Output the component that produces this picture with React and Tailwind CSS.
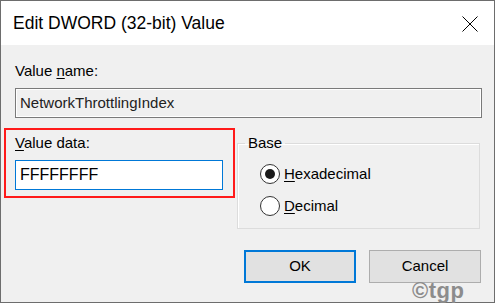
import React from "react";

const font = { fontFamily: "'Liberation Sans', Arial, sans-serif" };

function Radio({ checked, accessKey, rest }) {
  return (
    <div className="flex items-center h-[32px]">
      <span className="w-[20px] h-[20px] rounded-full border border-[#333333] bg-white flex items-center justify-center shrink-0">
        {checked && <span className="w-[10px] h-[10px] rounded-full bg-[#1a1a1a]" />}
      </span>
      <span className="ml-[4px] text-[15px] leading-[20px] text-black">
        <span className="underline underline-offset-2">{accessKey}</span>
        {rest}
      </span>
    </div>
  );
}

export default function App() {
  return (
    <div className="w-[495px] h-[304px] bg-white" style={font}>
      <div className="relative w-[495px] h-[303px] border border-[#6d6d6d] flex flex-col bg-[#f0f0f0]">
        {/* title bar */}
        <div className="h-[44px] bg-white flex items-center justify-between pl-[12px] pr-[16px] shrink-0">
          <span className="text-[17.5px] leading-[24px] text-black">Edit DWORD (32-bit) Value</span>
          <svg width="16" height="16" viewBox="0 0 16 16" className="mt-[1px]">
            <path d="M0.5 0.5 L15.5 15.5 M15.5 0.5 L0.5 15.5" stroke="#000" strokeWidth="1" fill="none" />
          </svg>
        </div>

        {/* body */}
        <div className="flex-1 flex flex-col">
          <div className="pl-[14px] pr-[12px] pt-[16px]">
            <div className="text-[15px] leading-[20px] text-black">
              Value <span className="underline underline-offset-2">n</span>ame:
            </div>
            <div className="mt-[7px] h-[30px] border border-[#7a7a7a] shadow-[inset_0_0_0_1px_#ffffff] bg-[#f0f0f0] flex items-center pl-[4px] text-[15px] text-[#222]">
              NetworkThrottlingIndex
            </div>
          </div>

          <div className="flex mt-[10px] pl-[3px]">
            <div className="w-[231px] h-[70px] border-2 border-[#ff1a1a] pl-[9px] pr-[10px] pt-[3px]">
              <div className="text-[15px] leading-[20px] text-black">
                <span className="underline underline-offset-2">V</span>alue data:
              </div>
              <div className="mt-[7px] w-[208px] h-[30px] border border-[#0078d7] bg-white flex items-center pl-[4px] text-[16px] text-black">
                FFFFFFFF
              </div>
            </div>

            <fieldset className="ml-[2px] mt-[5px] w-[243px] h-[96px] border border-[#dcdcdc] shadow-[inset_1px_1px_0_#ffffff]">
              <legend className="ml-[7px] px-[3px] text-[15px] leading-[20px] text-black">Base</legend>
              <div className="mt-[5px] pl-[22px]">
                <Radio checked accessKey="H" rest="exadecimal" />
                <Radio accessKey="D" rest="ecimal" />
              </div>
            </fieldset>
          </div>

          <div className="flex justify-end gap-[13px] pr-[13px] mt-[21px]">
            <button className="w-[112px] h-[33px] bg-[#e1e1e1] border-2 border-[#0078d7] text-[15px] text-black">OK</button>
            <button className="w-[112px] h-[33px] bg-[#e1e1e1] border border-[#adadad] text-[15px] text-black">Cancel</button>
          </div>
        </div>

        <span className="absolute left-[411px] top-[278px] text-[22px] leading-[24px] font-semibold text-[#8c8c8c] tracking-[0.5px]">©tgp</span>
      </div>
    </div>
  );
}
